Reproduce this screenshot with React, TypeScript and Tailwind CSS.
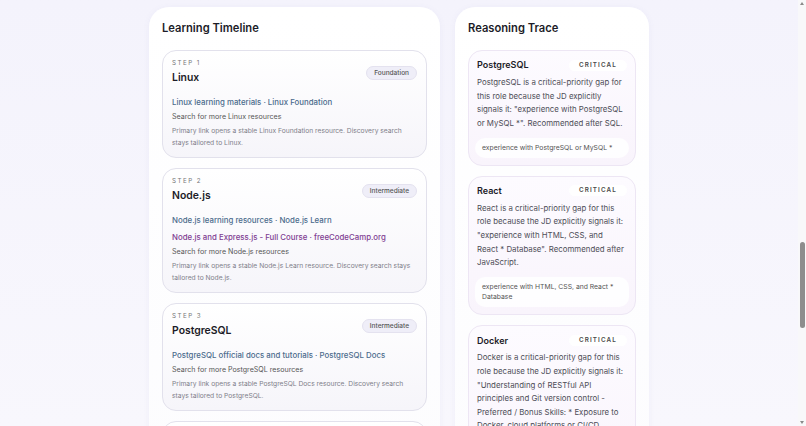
import type { ReactNode } from "react";

const steps = [
  {
    n: 1,
    title: "Linux",
    level: "Foundation",
    links: [{ text: "Linux learning materials · Linux Foundation", visited: false }],
    provider: "Linux Foundation",
  },
  {
    n: 2,
    title: "Node.js",
    level: "Intermediate",
    links: [
      { text: "Node.js learning resources · Node.js Learn", visited: false },
      { text: "Node.js and Express.js - Full Course · freeCodeCamp.org", visited: true },
    ],
    provider: "Node.js Learn",
  },
  {
    n: 3,
    title: "PostgreSQL",
    level: "Intermediate",
    links: [{ text: "PostgreSQL official docs and tutorials · PostgreSQL Docs", visited: false }],
    provider: "PostgreSQL Docs",
  },
  {
    n: 4,
    title: "React",
    level: "Intermediate",
    links: [{ text: "React official docs · react.dev", visited: false }],
    provider: "react.dev",
  },
];

const traces = [
  {
    skill: "PostgreSQL",
    body: 'PostgreSQL is a critical-priority gap for this role because the JD explicitly signals it: "experience with PostgreSQL or MySQL *". Recommended after SQL.',
    quote: "experience with PostgreSQL or MySQL *",
  },
  {
    skill: "React",
    body: 'React is a critical-priority gap for this role because the JD explicitly signals it: "experience with HTML, CSS, and React\u00a0* Database". Recommended after JavaScript.',
    quote: "experience with HTML, CSS, and React * Database",
  },
  {
    skill: "Docker",
    body: 'Docker is a critical-priority gap for this role because the JD explicitly signals it: "Understanding of RESTful API principles and Git version control - Preferred / Bonus Skills: * Exposure to Docker, cloud platforms or CI/CD pipelines". Recommended after Linux.',
    quote: "Exposure to Docker, cloud platforms or CI/CD pipelines",
  },
];

function Panel({ title, children }: { title: string; children: ReactNode }) {
  return (
    <section className="rounded-[20px] bg-gradient-to-b from-white to-[#fcfcfe] px-[13px] pt-[14px] pb-4 shadow-[0_1px_6px_rgba(120,110,180,0.07)]">
      <h2 className="text-[11.2px] font-semibold text-[#1c1c28] leading-[15px] mb-[14px]">{title}</h2>
      <div className="flex flex-col gap-[10px]">{children}</div>
    </section>
  );
}

function StepCard({ step }: { step: (typeof steps)[number] }) {
  return (
    <article className="rounded-[14px] border border-[#e2e1ec] bg-gradient-to-b from-white to-[#f6f5fa] px-[9px] pt-[7px] pb-[8px]">
      <div className="flex items-start justify-between">
        <div>
          <div className="text-[6.2px] tracking-[0.24em] text-[#777] leading-[10px]">STEP {step.n}</div>
          <div className="text-[10.4px] font-semibold text-[#1c1c28] leading-[14px] mt-[3px]">{step.title}</div>
        </div>
        <span className="mt-[8px] rounded-full border border-[#e4e2ef] bg-[#efeef8] px-[7px] py-[1.5px] text-[6.5px] font-medium text-[#555] leading-[9px]">
          {step.level}
        </span>
      </div>
      <div className="mt-[12px] flex flex-col gap-[6px]">
        {step.links.map((l) => (
          <a
            key={l.text}
            className={`text-[7.85px] font-medium leading-[11px] ${l.visited ? "text-[#7f3d92]" : "text-[#4b6b8c]"}`}
          >
            {l.text}
          </a>
        ))}
      </div>
      <div className="mt-[4px] text-[7.1px] text-[#555] leading-[10px]">Search for more {step.title} resources</div>
      <p className="mt-[3px] text-[6.7px] text-[#80808a] leading-[12px]">
        Primary link opens a stable {step.provider} resource. Discovery search stays tailored to {step.title}.
      </p>
    </article>
  );
}

function TraceCard({ t }: { t: (typeof traces)[number] }) {
  return (
    <article className="rounded-[14px] border border-[#ede6f4] bg-gradient-to-b from-[#fdfbff] to-[#f9f4fc] px-[8px] pt-[8px] pb-[7px]">
      <div className="flex h-[12px] items-center justify-between">
        <span className="text-[9px] font-semibold text-[#1c1c28]">{t.skill}</span>
        <span className="rounded-full bg-white px-[10px] py-[1px] text-[6.3px] font-semibold tracking-[0.18em] text-[#4a4a4a] leading-[9px]">
          CRITICAL
        </span>
      </div>
      <p className="mt-[5px] text-[7.85px] text-[#4d4d57] leading-[13.6px]">{t.body}</p>
      <div className="-mx-[2px] mt-[7.5px] rounded-[10px] bg-white/85 px-[7px] py-[5px] text-[6.8px] text-[#555] leading-[10px]">
        {t.quote}
      </div>
    </article>
  );
}

function FakeScrollbar() {
  return (
    <aside className="flex h-[426px] w-[8px] shrink-0 flex-col items-center bg-[#f8f8fa]">
      <div className="mt-[2px] h-0 w-0 border-x-[2.5px] border-b-[3px] border-x-transparent border-b-[#8a8a8a]" />
      <div className="mt-[237px] h-[86px] w-[5px] rounded-full bg-[#8d8d8d]" />
      <div className="mt-auto mb-[2px] h-0 w-0 border-x-[2.5px] border-t-[3px] border-x-transparent border-t-[#8a8a8a]" />
    </aside>
  );
}

export default function App() {
  return (
    <div
      className="flex h-[426px] overflow-hidden bg-gradient-to-b from-[#f4f3fc] to-[#f8f7fd]"
      style={{ fontFamily: "Inter, 'Noto Sans', sans-serif" }}
    >
      <div className="min-w-0 flex-1">
        <main className="mx-auto grid w-[500px] grid-cols-[291px_194px] items-start gap-[15px] pt-[7px]">
          <Panel title="Learning Timeline">
            {steps.map((s) => (
              <StepCard key={s.n} step={s} />
            ))}
          </Panel>
          <Panel title="Reasoning Trace">
            {traces.map((t) => (
              <TraceCard key={t.skill} t={t} />
            ))}
          </Panel>
        </main>
      </div>
      <FakeScrollbar />
    </div>
  );
}
